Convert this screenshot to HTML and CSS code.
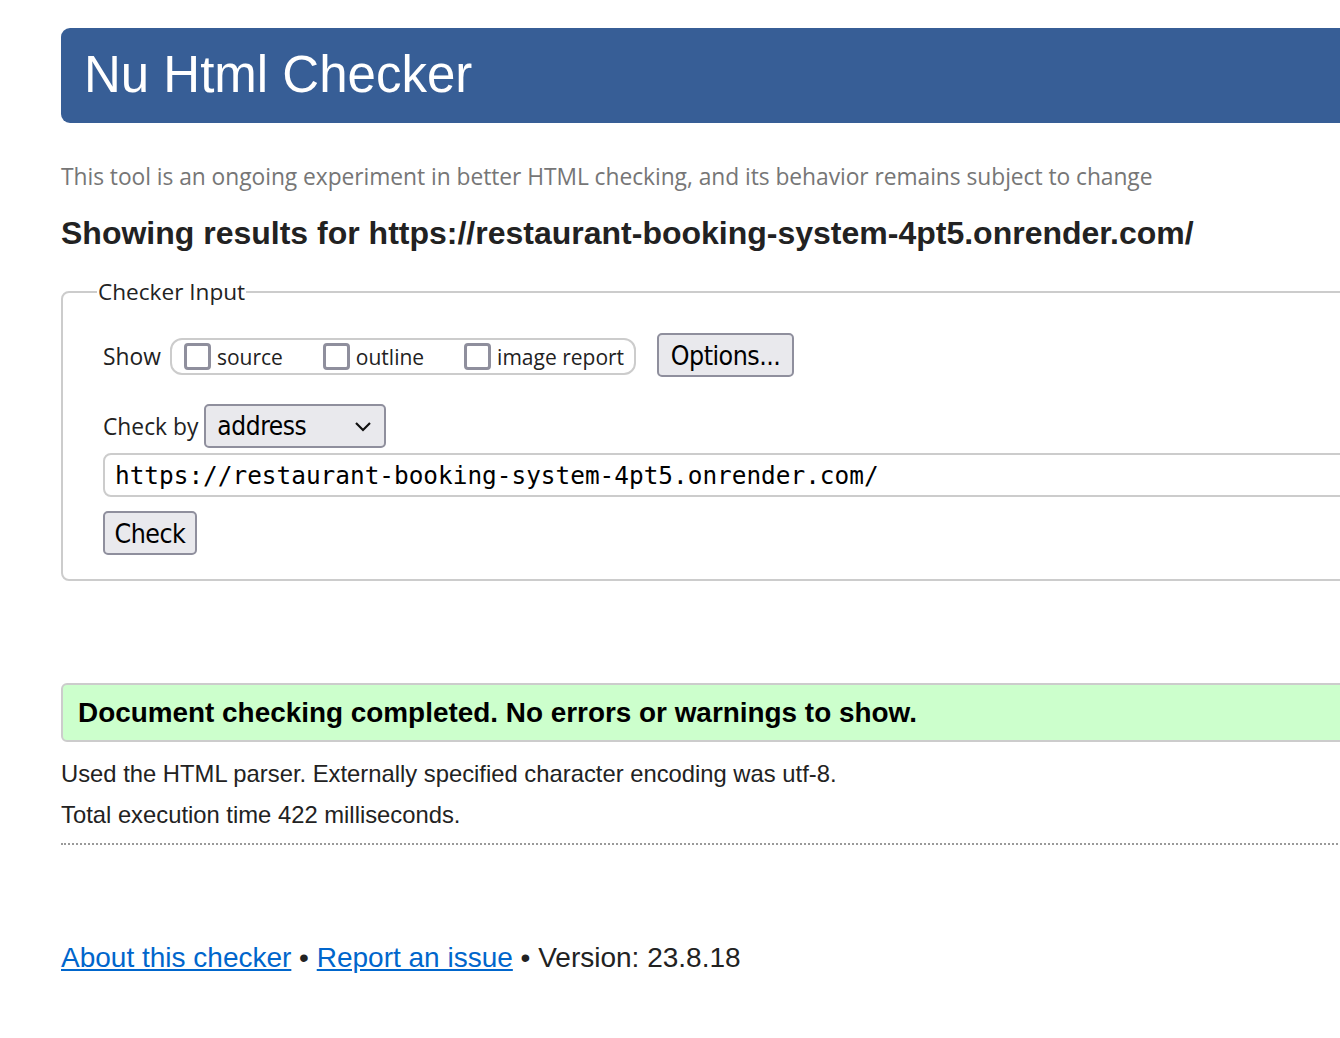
FILE: index.html
```html
<!DOCTYPE html>
<html lang="en">
<head>
<meta charset="utf-8">
<title>Nu Html Checker</title>
<link rel="stylesheet" href="styles.css">
</head>
<body>
<div class="page">
  <header class="banner"><h1>Nu Html Checker</h1></header>
  <p class="intro">This tool is an ongoing experiment in better HTML checking, and its behavior remains subject to change</p>
  <h2 class="results-for">Showing results for https://restaurant-booking-system-4pt5.onrender.com/</h2>
  <fieldset class="checker">
    <legend>Checker Input</legend>
    <div class="show-row">
      <span class="lbl">Show</span>
      <div class="show-group">
        <label class="opt"><input type="checkbox"><span>source</span></label>
        <label class="opt"><input type="checkbox"><span>outline</span></label>
        <label class="opt"><input type="checkbox"><span>image report</span></label>
      </div>
      <button class="btn btn-options" type="button">Options...</button>
    </div>
    <div class="by-row">
      <span class="lbl">Check by</span>
      <div class="select">
        <span>address</span>
        <svg width="18" height="12" viewBox="0 0 18 12"><path d="M2 3 L9 10 L16 3" fill="none" stroke="#111" stroke-width="2.2"/></svg>
      </div>
    </div>
    <div class="url-input">https://restaurant-booking-system-4pt5.onrender.com/</div>
    <button class="btn btn-check" type="button">Check</button>
  </fieldset>
  <div class="success">Document checking completed. No errors or warnings to show.</div>
  <p class="info info-first">Used the HTML parser. Externally specified character encoding was utf-8.</p>
  <p class="info">Total execution time 422 milliseconds.</p>
  <hr class="dots">
  <footer class="foot">
    <a href="#">About this checker</a> &bull; <a href="#">Report an issue</a> &bull; Version: 23.8.18
  </footer>
</div>
</body>
</html>
```
FILE: styles.css
```css
html, body {
  margin: 0;
  padding: 0;
  overflow: hidden;
  background: #fff;
}
body {
  font-family: "Liberation Sans", Arial, sans-serif;
  color: #222;
}
.page {
  width: 1500px;
  padding-left: 61px;
  padding-top: 28px;
}
.banner {
  background: #375e96;
  border-radius: 9px;
  height: 95px;
  display: flex;
  align-items: center;
  padding-left: 23px;
}
.banner h1 {
  margin: 0;
  font-weight: normal;
  font-size: 51px;
  color: #fff;
  line-height: 1;
  padding-bottom: 2px;
}
.intro {
  margin: 39px 0 0;
  font-family: "Open Sans", sans-serif;
  font-size: 22.8px;
  line-height: 30px;
  color: #767676;
  letter-spacing: -0.05px;
}
.results-for {
  margin: 23px 0 0;
  font-size: 32px;
  line-height: 36px;
  font-weight: bold;
  color: #222;
}
.checker {
  margin: 26px 0 0;
  border: 2px solid #cccccc;
  border-radius: 8px;
  padding: 27px 0 24px 40px;
}
.checker legend {
  font-family: "Open Sans", sans-serif;
  font-size: 22.6px;
  line-height: 30px;
  color: #222;
  padding: 0 1px;
  margin-left: -6px;
}
.lbl {
  font-family: "Open Sans", sans-serif;
  font-size: 22.8px;
  color: #222;
}
.show-row {
  display: flex;
  align-items: center;
  height: 45px;
}
.show-group {
  margin-left: 9px;
  border: 2px solid #cccccc;
  border-radius: 12px;
  height: 33px;
  display: flex;
  align-items: center;
  padding: 0 10px 0 12px;
  gap: 40px;
}
.opt {
  display: flex;
  align-items: center;
  gap: 6px;
  font-family: "Open Sans", sans-serif;
  font-size: 21px;
  color: #222;
}
.opt input {
  -webkit-appearance: none;
  appearance: none;
  width: 27px;
  height: 27px;
  margin: 0;
  border: 3px solid #8f8f9d;
  border-radius: 4px;
  background: #fff;
}
.btn {
  font-family: "DejaVu Sans Condensed", "DejaVu Sans", sans-serif;
  font-size: 26.5px;
  color: #000;
  background: #e9e9ed;
  border: 2px solid #8f8f9d;
  border-radius: 5px;
  height: 44px;
  padding: 0 8px;
  margin: 0;
  letter-spacing: -0.5px;
}
.btn-options {
  margin-left: 21px;
  width: 137px;
  margin-top: -3px;
}
.by-row {
  display: flex;
  align-items: center;
  margin-top: 25px;
  height: 44px;
}
.select {
  margin-left: 6px;
  width: 182px;
  height: 44px;
  box-sizing: border-box;
  background: #e9e9ed;
  border: 2px solid #8f8f9d;
  border-radius: 5px;
  display: flex;
  align-items: center;
  justify-content: space-between;
  padding: 0 12px 0 11px;
  font-family: "DejaVu Sans Condensed", "DejaVu Sans", sans-serif;
  font-size: 26px;
  letter-spacing: -0.4px;
  color: #000;
}
.url-input {
  margin-top: 5px;
  height: 44px;
  box-sizing: border-box;
  border: 2px solid #cccccc;
  border-radius: 8px;
  display: flex;
  align-items: center;
  padding-left: 10px;
  font-family: "DejaVu Sans Mono", monospace;
  font-size: 24.4px;
  color: #000;
}
.btn-check {
  margin-top: 14px;
  width: 94px;
  display: block;
}
.success {
  margin-top: 102px;
  height: 59px;
  box-sizing: border-box;
  background: #ccffcc;
  border: 2px solid #cccccc;
  border-radius: 6px;
  display: flex;
  align-items: center;
  padding-left: 15px;
  font-weight: bold;
  font-size: 27.9px;
  color: #000;
}
.info {
  margin: 0;
  font-size: 23.8px;
  line-height: 41px;
  color: #222;
}
.info-first {
  margin-top: 11px;
}
.dots {
  margin: 8px 0 0;
  border: 0;
  border-top: 2px dotted #9a9a9a;
  height: 0;
}
.foot {
  margin-top: 93px;
  font-size: 28px;
  line-height: 40px;
  color: #222;
}
.foot a {
  color: #0066cc;
  text-decoration: underline;
}
```
